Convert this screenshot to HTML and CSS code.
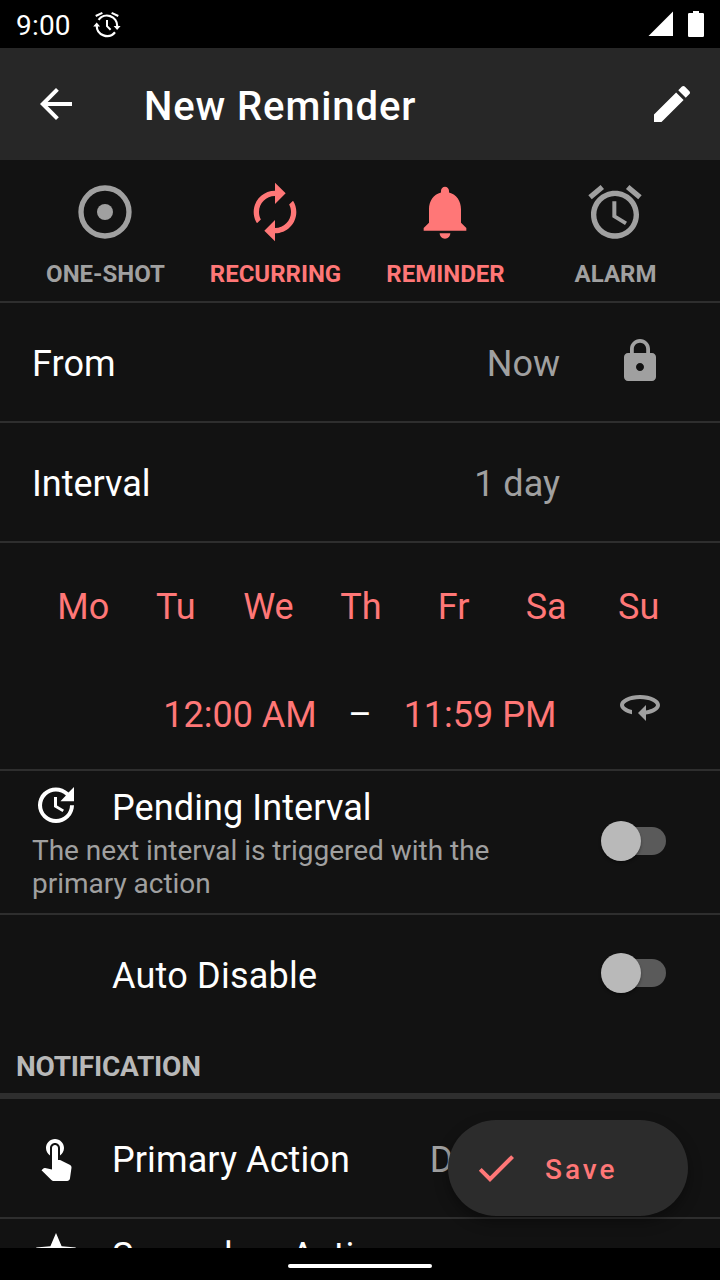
FILE: index.html
```html
<!DOCTYPE html>
<html lang="en">
<head>
<meta charset="utf-8">
<title>New Reminder</title>
<link rel="stylesheet" href="styles.css">
</head>
<body>
<div class="screen">
  <div class="status-bar">
    <span class="clock">9:00</span>
    <svg class="status-alarm" viewBox="0 0 28 28">
      <g fill="none" stroke="#fff" stroke-width="2.2">
        <path d="M5.6 8.8A10.3 10.3 0 0 1 24.2 15M22 21.2A10.3 10.3 0 0 1 3.7 14.6"/>
        <path d="M2.7 5 9.4 1.8M18.6 1.8l6.7 3.2M14 9v6.2l3.6 3.6" stroke-width="2"/>
      </g>
      <path d="M.2 15.6 3.7 11.6l3.4 4zM20.6 14.9h7L24.1 19z"/>
    </svg>
    <svg class="signal" viewBox="0 0 26 26"><path d="M25 .5V25H.5z"/></svg>
    <svg class="battery" viewBox="0 0 16 26"><path d="M5 0h6v2h3.7Q16 2 16 3.3v21.4Q16 26 14.7 26H1.3Q0 26 0 24.7V3.3Q0 2 1.3 2H5z"/></svg>
  </div>

  <header class="app-bar">
    <svg class="icon" viewBox="0 0 24 24"><path d="M20 11H7.83l5.59-5.59L12 4l-8 8 8 8 1.41-1.41L7.83 13H20v-2z"/></svg>
    <h1 class="title">New Reminder</h1>
    <svg class="icon" viewBox="0 0 24 24"><path d="M3 17.25V21h3.75L17.81 9.94l-3.75-3.75L3 17.25zM20.71 7.04c.39-.39.39-1.02 0-1.41l-2.34-2.34c-.39-.39-1.02-.39-1.41 0l-1.83 1.83 3.75 3.75 1.83-1.83z"/></svg>
  </header>

  <main class="content">
    <nav class="types">
      <div class="type">
        <svg class="type-icon" viewBox="0 0 24 24"><circle cx="12" cy="12" r="9" fill="none" stroke="currentColor" stroke-width="2"/><circle cx="12" cy="12" r="3"/></svg>
        <span>ONE-SHOT</span>
      </div>
      <div class="type active">
        <svg class="type-icon" viewBox="0 0 24 24"><path d="M12 6v3l4-4-4-4v3c-4.42 0-8 3.58-8 8 0 1.57.46 3.03 1.24 4.26L6.7 14.8c-.45-.83-.7-1.79-.7-2.8 0-3.31 2.69-6 6-6zm6.76 1.74L17.3 9.2c.44.84.7 1.79.7 2.8 0 3.31-2.69 6-6 6v-3l-4 4 4 4v-3c4.42 0 8-3.58 8-8 0-1.57-.46-3.03-1.24-4.26z"/></svg>
        <span>RECURRING</span>
      </div>
      <div class="type active">
        <svg class="type-icon" viewBox="0 0 24 24"><path d="M12 22c1.1 0 2-.9 2-2h-4c0 1.1.89 2 2 2zm6-6v-5c0-3.07-1.64-5.64-4.5-6.32V4c0-.83-.67-1.5-1.5-1.5s-1.5.67-1.5 1.5v.68C7.63 5.36 6 7.92 6 11v5l-2 2v1h16v-1l-2-2z"/></svg>
        <span>REMINDER</span>
      </div>
      <div class="type">
        <svg class="type-icon" viewBox="0 0 24 24"><path d="M22 5.72l-4.6-3.86-1.29 1.53 4.6 3.86L22 5.72zM7.88 3.39L6.6 1.86 2 5.71l1.29 1.53 4.59-3.85zM12.5 8H11v6l4.75 2.85.75-1.23-4-2.37V8zM12 4c-4.97 0-9 4.03-9 9s4.02 9 9 9c4.97 0 9-4.03 9-9s-4.03-9-9-9zm0 16c-3.87 0-7-3.13-7-7s3.13-7 7-7 7 3.13 7 7-3.13 7-7 7z"/></svg>
        <span>ALARM</span>
      </div>
    </nav>

    <div class="row">
      <span class="label">From</span>
      <span class="value">Now</span>
      <svg class="icon trailing" viewBox="0 0 24 24"><path d="M18 8h-1V6c0-2.76-2.24-5-5-5S7 3.24 7 6v2H6c-1.1 0-2 .9-2 2v10c0 1.1.9 2 2 2h12c1.1 0 2-.9 2-2V10c0-1.1-.9-2-2-2zm-6 9c-1.1 0-2-.9-2-2s.9-2 2-2 2 .9 2 2-.9 2-2 2zm3.1-9H8.9V6c0-1.71 1.39-3.1 3.1-3.1 1.71 0 3.1 1.39 3.1 3.1v2z"/></svg>
    </div>
    <div class="row">
      <span class="label interval">Interval</span>
      <span class="value">1 day</span>
      <span class="icon trailing"></span>
    </div>

    <section class="schedule">
      <div class="days">
        <span>Mo</span><span>Tu</span><span>We</span><span>Th</span><span>Fr</span><span>Sa</span><span>Su</span>
      </div>
      <div class="times">
        <span>12:00 AM</span><span class="dash">–</span><span>11:59 PM</span>
        <svg class="icon rotate" viewBox="0 0 24 24"><path transform="matrix(-1 0 0 1 24 0)" d="M12 7C6.48 7 2 9.24 2 12c0 2.24 2.94 4.13 7 4.77V20l4-4-4-4v2.73c-3.15-.56-5-1.9-5-2.73 0-1.06 3.04-3 8-3s8 1.94 8 3c0 .73-1.46 1.89-4 2.53v2.05c3.53-.77 6-2.53 6-4.58 0-2.76-4.48-5-10-5z"/></svg>
      </div>
    </section>

    <div class="pending">
      <div class="pending-text">
        <div class="pending-head">
          <svg class="icon" viewBox="0 0 24 24"><path d="M21 10.12h-6.78l2.74-2.82c-2.73-2.7-7.15-2.8-9.88-.1-2.73 2.71-2.73 7.08 0 9.79s7.15 2.71 9.88 0C18.32 15.65 19 14.08 19 12.1h2c0 1.98-.88 4.55-2.64 6.29-3.51 3.48-9.21 3.48-12.72 0-3.5-3.47-3.53-9.11-.02-12.58s9.14-3.47 12.65 0L21 3v7.12zM12.5 8v4.25l3.5 2.08-.72 1.21L11 13V8h1.5z"/></svg>
          <span class="label">Pending Interval</span>
        </div>
        <p class="description">The next interval is triggered with the primary action</p>
      </div>
      <span class="switch"><span class="thumb"></span></span>
    </div>

    <div class="auto-disable">
      <span class="label">Auto Disable</span>
      <span class="switch"><span class="thumb"></span></span>
    </div>

    <h2 class="section-title">NOTIFICATION</h2>

    <div class="row primary">
      <svg class="icon" viewBox="0 0 24 24"><path d="M9 11.24V7.5C9 6.12 10.12 5 11.5 5S14 6.12 14 7.5v3.74c1.21-.81 2-2.18 2-3.74C16 5.01 13.99 3 11.5 3S7 5.01 7 7.5c0 1.56.79 2.93 2 3.74zm9.84 4.63l-4.54-2.26c-.17-.07-.35-.11-.54-.11H13v-6c0-.83-.67-1.5-1.5-1.5S10 6.67 10 7.5v10.74l-3.43-.72c-.08-.01-.15-.03-.24-.03-.31 0-.59.13-.79.33l-.79.8 4.94 4.94c.27.27.65.44 1.06.44h6.79c.75 0 1.33-.55 1.44-1.28l.75-5.27c.01-.07.02-.14.02-.2 0-.62-.38-1.16-.91-1.38z"/></svg>
      <span class="label">Primary Action</span>
      <span class="value">Dismiss</span>
      <span class="icon trailing"></span>
    </div>
    <div class="secondary">
      <svg class="icon" viewBox="0 0 24 24"><path d="M12 17.27L18.18 21l-1.64-7.03L22 9.24l-7.19-.61L12 2 9.19 8.63 2 9.24l5.46 4.73L5.82 21z"/></svg>
      <span class="label">Secondary Action</span>
    </div>
  </main>

  <button class="save" type="button">
    <svg class="icon" viewBox="0 0 24 24"><path d="M9 16.17L4.83 12l-1.42 1.41L9 19 21 7l-1.41-1.41z"/></svg>
    <span>Save</span>
  </button>

  <div class="nav-bar"><span class="handle"></span></div>
</div>
</body>
</html>
```

FILE: styles.css
```css
* { box-sizing: border-box; margin: 0; padding: 0; }

body {
  background: #000;
  color: #fff;
  font-family: Roboto, sans-serif;
  font-size: 36px;
  line-height: 42px;
}

svg { display: block; flex: none; fill: currentColor; }

.screen {
  position: relative;
  display: flex;
  flex-direction: column;
  width: 720px;
  height: 1280px;
  overflow: hidden;
}

.icon { width: 48px; height: 48px; flex: none; }

.status-bar {
  display: flex;
  flex: none;
  align-items: flex-start;
  height: 48px;
  padding: 11px 16px 0;
}
.clock { width: 77px; font-size: 28px; line-height: 29px; letter-spacing: .2px; }
.status-alarm { width: 28px; height: 28px; }
.signal { width: 26px; height: 26px; margin-left: auto; }
.battery { width: 16px; height: 26px; margin-left: 14px; }

.app-bar {
  display: flex;
  flex: none;
  align-items: center;
  height: 112px;
  padding: 0 24px 0 32px;
  background: #272727;
}
.title {
  flex: 1;
  padding: 6px 0 0 64px;
  font-size: 40px;
  font-weight: 500;
  letter-spacing: .9px;
}

.content {
  flex: none;
  height: 1088px;
  overflow: hidden;
  background: #121212;
}

.types {
  display: grid;
  grid-template-columns: repeat(4, 1fr);
  height: 143px;
  padding: 20px 20px 0;
  border-bottom: 2px solid #2e2e2e;
}
.type {
  display: flex;
  flex-direction: column;
  align-items: center;
  gap: 16px;
  color: #a0a0a0;
  font-size: 24px;
  font-weight: 700;
  line-height: 28px;
}
.type span { padding-left: 1px; }
.type.active { color: #ff7777; }
.type-icon { width: 64px; height: 64px; }

.row {
  display: flex;
  align-items: center;
  height: 120px;
  padding: 0 56px 0 32px;
  border-bottom: 2px solid #2e2e2e;
}
.label, .value { padding-top: 3px; white-space: nowrap; }
.label { letter-spacing: .1px; }
.label.interval { letter-spacing: 0; }
.value { margin-left: auto; color: #a0a0a0; }
.trailing { margin: 0 0 2px 56px; color: #a0a0a0; }
.icon + .label { margin-left: 32px; }

.schedule {
  height: 228px;
  padding: 43px 35px 0 37px;
  border-bottom: 2px solid #2e2e2e;
  color: #ff7777;
}
.days {
  display: grid;
  grid-template-columns: repeat(7, 1fr);
  text-align: center;
}
.times {
  display: grid;
  grid-template-columns: 160px 80px 160px 48px;
  align-items: center;
  margin: 66px 0 0 123px;
  text-align: center;
}
.dash { color: #fff; }
.rotate { margin: -21px 0 0 56px; color: #a0a0a0; }

.pending {
  display: flex;
  align-items: center;
  justify-content: space-between;
  height: 144px;
  padding: 0 48px 0 32px;
  border-bottom: 2px solid #2e2e2e;
}
.pending-text { width: 500px; height: 122px; }
.pending-head { display: flex; align-items: center; }
.pending-head .label { padding-top: 5px; }
.description {
  padding-top: 5px;
  color: #a0a0a0;
  font-size: 28px;
  line-height: 33px;
  letter-spacing: -.02px;
}

.switch {
  display: flex;
  align-items: center;
  flex: none;
  width: 54px;
  height: 28px;
  margin: 0 6px 2px 0;
  border-radius: 14px;
  background: #5a5a5a;
}
.thumb {
  width: 40px;
  height: 40px;
  flex: none;
  margin-left: -11px;
  border-radius: 50%;
  background: #b9b9b9;
  box-shadow: 0 2px 3px rgba(0, 0, 0, .35);
}

.auto-disable {
  display: flex;
  align-items: center;
  justify-content: space-between;
  height: 118px;
  padding: 0 48px 0 112px;
}
.auto-disable .label { letter-spacing: .22px; }

.section-title {
  height: 66px;
  padding: 17px 16px 0;
  border-bottom: 6px solid #2e2e2e;
  color: #b8b8b8;
  font-size: 28px;
  font-weight: 700;
  line-height: 33px;
  letter-spacing: -.22px;
}

.primary > .icon:first-child { margin-bottom: 2px; }
.primary .value { letter-spacing: .25px; }
.secondary {
  display: flex;
  align-items: flex-start;
  padding: 10px 56px 0 32px;
}
.secondary .label { padding-top: 6px; }

.save {
  position: absolute;
  top: 1120px;
  left: 448px;
  display: flex;
  align-items: center;
  width: 240px;
  height: 96px;
  padding-left: 24px;
  border: 0;
  border-radius: 48px;
  background: #2c2c2c;
  box-shadow: 0 6px 14px rgba(0, 0, 0, .35);
  color: #ff7777;
  font: 500 28px/33px Roboto, sans-serif;
  letter-spacing: 3px;
}
.save span { padding: 3px 0 0 25px; }

.nav-bar {
  position: relative;
  display: flex;
  flex: none;
  justify-content: center;
  height: 32px;
  padding-top: 16px;
  background: #000;
}
.handle { width: 144px; height: 4px; border-radius: 2px; background: #fff; }
```
